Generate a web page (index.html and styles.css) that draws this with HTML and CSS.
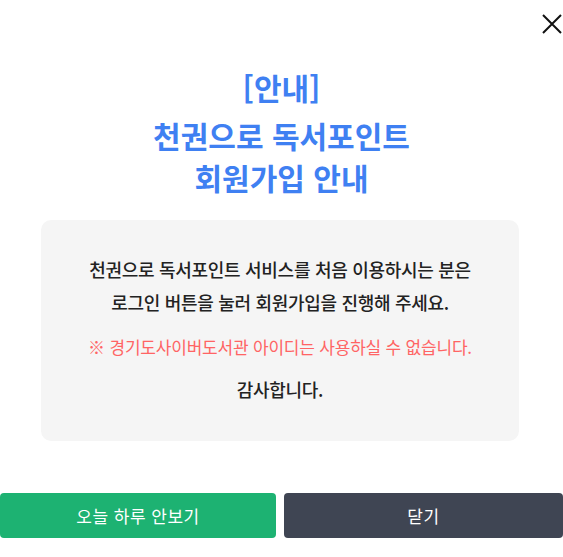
FILE: index.html
```html
<!DOCTYPE html>
<html lang="ko">
<head>
  <meta charset="utf-8">
  <title>회원가입 안내</title>
  <link rel="stylesheet" href="styles.css">
</head>
<body>
  <div class="popup">
    <button class="close" aria-label="닫기">
      <svg width="20" height="20" viewBox="0 0 20 20">
        <path d="M1 1 L19 19 M19 1 L1 19" stroke="#111" stroke-width="2" fill="none"/>
      </svg>
    </button>

    <div class="head">
      <p class="label">[안내]</p>
      <h2 class="title">천권으로 독서포인트<br>회원가입 안내</h2>
    </div>

    <div class="notice">
      <p class="desc">천권으로 독서포인트 서비스를 처음 이용하시는 분은<br>로그인 버튼을 눌러 회원가입을 진행해 주세요.</p>
      <p class="warn">※ 경기도사이버도서관 아이디는 사용하실 수 없습니다.</p>
      <p class="thanks">감사합니다.</p>
    </div>

    <div class="buttons">
      <button class="btn today">오늘 하루 안보기</button>
      <button class="btn shut">닫기</button>
    </div>
  </div>
</body>
</html>
```

FILE: styles.css
```css
body {
  margin: 0;
  background: #fff;
  font-family: "Noto Sans CJK KR", "Noto Sans", sans-serif;
}
p, h2 {
  margin: 0;
}
.popup {
  position: relative;
  width: 563px;
  padding-top: 68px;
}
.close {
  position: absolute;
  top: 14px;
  right: 1px;
  padding: 0;
  border: none;
  background: none;
  cursor: pointer;
}
.head {
  text-align: center;
  color: #3f80f2;
  font-weight: bold;
}
.label {
  font-size: 30px;
  line-height: 38px;
}
.title {
  margin-top: 8px;
  font-size: 30px;
  line-height: 42px;
}
.notice {
  margin: 22px 44px 0 41px;
  padding: 33px 0 40px;
  background: #f5f5f5;
  border-radius: 10px;
  text-align: center;
  color: #222;
  font-weight: 500;
}
.desc {
  font-size: 18px;
  line-height: 33px;
  letter-spacing: -0.3px;
}
.warn {
  margin-top: 16px;
  font-size: 17px;
  line-height: 24px;
  font-weight: 400;
  color: #ff6464;
  letter-spacing: -0.2px;
}
.thanks {
  margin-top: 18px;
  font-size: 18px;
  line-height: 24px;
  letter-spacing: -0.3px;
}
.buttons {
  display: grid;
  grid-template-columns: 276px 1fr;
  gap: 8px;
  margin-top: 52px;
}
.btn {
  height: 45px;
  border: none;
  border-radius: 4px;
  color: #fff;
  font-family: inherit;
  font-size: 17px;
  letter-spacing: 0.5px;
  cursor: pointer;
}
.today {
  background: #1db272;
}
.shut {
  background: #3f4553;
}
```
